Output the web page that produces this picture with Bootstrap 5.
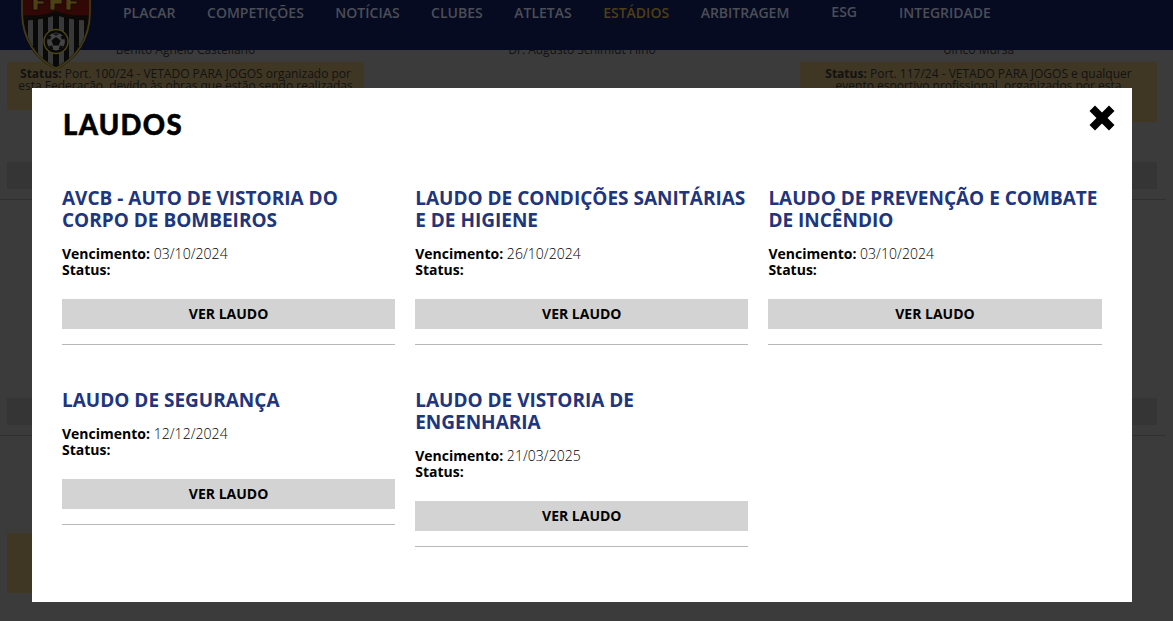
<!DOCTYPE html>
<html lang="pt-BR">
<head>
<meta charset="utf-8">
<meta name="viewport" content="width=device-width, initial-scale=1">
<title>Laudos</title>
<link href="https://cdn.jsdelivr.net/npm/bootstrap@5.3.0/dist/css/bootstrap.min.css" rel="stylesheet">
<style>
body{font-family:"Open Sans",sans-serif;background:#3b3b3b;color:#121212;height:621px;overflow:hidden}
.topbar{height:50px;background:#060b22;z-index:2}
.crest{left:20px;top:-24px;z-index:3}
.menu{padding-left:123px;gap:31.5px;font-size:14px;font-weight:600;line-height:26px;color:#4c4e56}
.menu a{color:inherit;text-decoration:none;white-space:nowrap}
.menu a.current{color:#4e3f14}
.menu .esg{margin:-1px 10.5px 0}
.stadiums{padding:0 16px 0 7px;margin-top:-7px;height:578px;overflow:hidden}
.stadiums .cells{display:grid;grid-template-columns:repeat(3,357px);column-gap:39.5px;height:236px}
.venue{display:flex;flex-direction:column;height:146px;text-align:center;font-size:12px;line-height:12px}
.who{height:19px;line-height:14px;font-size:12px}
.notice{background:#3f3724;padding:6px 8px;height:48px;font-weight:400}
.notice.big{height:60px}
.notice.lower{margin-top:18px}
.greybtn{height:27px;background:#353535;margin-top:auto}
.sep{border-bottom:1px solid #303030;height:11px;margin:0 -9px 0 -7px}
.modal-dialog{max-width:1100px;margin:88px 0 0 32px}
.modal-content{border:0;border-radius:0;height:514px;padding:0 30px;color:#000}
.title{font-family:Lato,sans-serif;font-weight:900;font-size:27.5px;line-height:36px;margin:19px 0 0 1px;letter-spacing:1.3px;-webkit-text-stroke:.5px #000}
.closer{right:17px;top:17px;width:26px;height:26px;padding:0;border:0;background:none;line-height:0}
.reports{display:grid;grid-template-columns:repeat(3,333.2px);column-gap:20px;margin-top:43.6px}
.report h2{font-size:19px;line-height:22px;font-weight:700;color:#21357c;margin:0 0 15px;white-space:nowrap}
.report{height:202px}
.report p{font-size:14px;line-height:16.500px;margin:0 0 20px}
.report b{font-weight:700}
.report time{font-weight:300;letter-spacing:.06px}
.report .btn{display:block;border:0;border-radius:0;background:#d3d3d3;color:#000;font-size:14px;font-weight:700;line-height:30px;padding:0}
.report hr{margin:15px 0 0;border-top:1px solid #b8b8b8;opacity:1}
</style>
</head>
<body>
<header class="topbar position-relative">
<nav class="menu d-flex">
<a>PLACAR</a><a>COMPETIÇÕES</a><a>NOTÍCIAS</a><a>CLUBES</a><a>ATLETAS</a><a class="current">ESTÁDIOS</a><a>ARBITRAGEM</a><a class="esg">ESG</a><a>INTEGRIDADE</a>
</nav>
<svg class="crest position-absolute" width="72" height="94" viewBox="0 -24 72 94">
<defs><clipPath id="shield"><path d="M3-22H69V12C69 38 55 58 36 67C17 58 3 38 3 12Z"/></clipPath></defs>
<path d="M1-24H71V12C71 40 57 60 36 69.500C15 60 1 40 1 12Z" fill="#0b0b0b"/>
<g clip-path="url(#shield)">
<path d="M3-22H69V80H3Z" fill="#393939"/>
<path d="M4 14h4v60H4ZM13 14h5v60h-5ZM23 14h5v60h-5ZM33 14h6v60h-6ZM44 14h5v60h-5ZM54 14h5v60h-5ZM64 14h4v60h-4Z" fill="#090909"/>
<path d="M3-22H69V20Q51 20 36 13Q21 20 3 20Z" fill="#310806"/>
<path d="M3 20V15Q21 17 36 11Q51 17 69 15V20Q51 21 36 15Q21 21 3 20Z" fill="#0c0908"/>
</g>
<g fill="none" stroke="#443c12" stroke-width="1.700"><path d="M2-24V12C2 39 16 59 36 68.500C56 59 70 39 70 12V-24"/></g>
<path d="M13-7H26V-4H18V1H24V4H18V10H13ZM30-7H42V4H35V10H30ZM46-7H58V-4H51V1H57V4H51V10H46Z" fill="#4d4013" stroke="#120b08" stroke-width=".8"/>
<circle cx="36" cy="41.500" r="12" fill="#080808" stroke="#4a4318" stroke-width="1.500"/>
<circle cx="36" cy="41.500" r="9" fill="#444"/>
<path d="M36 37l4.500 3.300-1.700 5.200h-5.600l-1.700-5.200ZM32 33.500h8l-4 2ZM27.500 39l1-3.500 3 1-1.500 3ZM44.500 39l-1-3.500-3 1 1.500 3ZM29 46l3-.5 1.500 4.300-3-1ZM43 46l-3-.5-1.500 4.300 3-1Z" fill="#0a0a0a"/>
</svg>
</header>
<main class="stadiums">
<div class="cells">
<div><div class="venue"><div class="who">Benito Agnelo Castellano</div><div class="notice"><b>Status:</b> Port. 100/24 - VETADO PARA JOGOS organizado por esta Federação, devido às obras que estão sendo realizadas</div><div class="greybtn"></div></div><div class="sep"></div></div>
<div><div class="venue"><div class="who">Dr. Augusto Schimidt Filho</div><div class="greybtn"></div></div><div class="sep"></div></div>
<div><div class="venue"><div class="who">Ulrico Mursa</div><div class="notice big"><b>Status:</b> Port. 117/24 - VETADO PARA JOGOS e qualquer evento esportivo profissional, organizados por esta</div><div class="greybtn"></div></div><div class="sep"></div></div>
</div>
<div class="cells">
<div><div class="venue"><div class="greybtn"></div></div><div class="sep"></div></div>
<div><div class="venue"><div class="greybtn"></div></div><div class="sep"></div></div>
<div><div class="venue"><div class="greybtn"></div></div><div class="sep"></div></div>
</div>
<div class="cells"><div><div class="notice big lower"></div></div></div>
</main>
<div class="modal d-block overflow-hidden" tabindex="-1">
<div class="modal-dialog"><div class="modal-content">
<h1 class="title">LAUDOS</h1>
<button class="closer position-absolute" aria-label="Fechar"><svg width="26" height="26" viewBox="0 0 26 26"><path d="M6 0.500L13 7.500L20 0.500L25.500 6L18.500 13L25.500 20L20 25.500L13 18.500L6 25.500L.5 20L7.500 13L.5 6Z"/></svg></button>
<div class="reports">
<section class="report"><h2>AVCB - AUTO DE VISTORIA DO<br>CORPO DE BOMBEIROS</h2><p><b>Vencimento:</b> <time>03/10/2024</time><br><b>Status:</b></p><a class="btn">VER LAUDO</a><hr></section>
<section class="report"><h2>LAUDO DE CONDIÇÕES SANITÁRIAS<br>E DE HIGIENE</h2><p><b>Vencimento:</b> <time>26/10/2024</time><br><b>Status:</b></p><a class="btn">VER LAUDO</a><hr></section>
<section class="report"><h2>LAUDO DE PREVENÇÃO E COMBATE<br>DE INCÊNDIO</h2><p><b>Vencimento:</b> <time>03/10/2024</time><br><b>Status:</b></p><a class="btn">VER LAUDO</a><hr></section>
<section class="report"><h2>LAUDO DE SEGURANÇA</h2><p><b>Vencimento:</b> <time>12/12/2024</time><br><b>Status:</b></p><a class="btn">VER LAUDO</a><hr></section>
<section class="report"><h2>LAUDO DE VISTORIA DE<br>ENGENHARIA</h2><p><b>Vencimento:</b> <time>21/03/2025</time><br><b>Status:</b></p><a class="btn">VER LAUDO</a><hr></section>
</div>
</div></div>
</div>
<script src="https://cdn.jsdelivr.net/npm/bootstrap@5.3.0/dist/js/bootstrap.bundle.min.js"></script>
</body>
</html>
